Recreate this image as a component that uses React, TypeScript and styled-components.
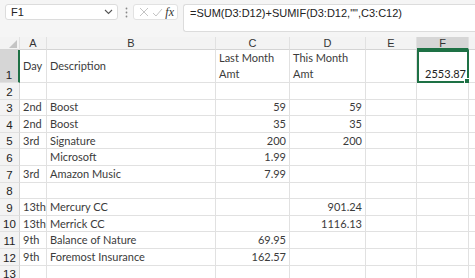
import React from 'react'
import styled,{createGlobalStyle,css} from 'styled-components'

const GRID_LINE='#e1e1e1'
const HEADER_BG='#f3f3f3'
const HEADER_ACTIVE_BG='#d6d6d6'
const SELECT_GREEN='#1e7145'
const CELL_TEXT='#3b3b3b'
const COLUMN_WIDTHS='20px 27px 169px 74px 76px 51px 52px 40px'
const COLUMNS=['A','B','C','D','E','F','G']
const ROW_HEIGHT=16.6

type CellValue=string|string[]

interface IRow{
    num:number;
    height:number;
    cells:CellValue[];
}

const ROWS:IRow[]=[
    {num:1,height:33,cells:['Day','Description',['Last Month','Amt'],['This Month','Amt'],'','2553.87','']},
    {num:2,height:ROW_HEIGHT,cells:['','','','','','','']},
    {num:3,height:ROW_HEIGHT,cells:['2nd','Boost','59','59','','','']},
    {num:4,height:ROW_HEIGHT,cells:['2nd','Boost','35','35','','','']},
    {num:5,height:ROW_HEIGHT,cells:['3rd','Signature','200','200','','','']},
    {num:6,height:ROW_HEIGHT,cells:['','Microsoft','1.99','','','','']},
    {num:7,height:ROW_HEIGHT,cells:['3rd','Amazon Music','7.99','','','','']},
    {num:8,height:ROW_HEIGHT,cells:['','','','','','','']},
    {num:9,height:ROW_HEIGHT,cells:['13th','Mercury CC','','901.24','','','']},
    {num:10,height:ROW_HEIGHT,cells:['13th','Merrick CC','','1116.13','','','']},
    {num:11,height:ROW_HEIGHT,cells:['9th','Balance of Nature','69.95','','','','']},
    {num:12,height:ROW_HEIGHT,cells:['9th','Foremost Insurance','162.57','','','','']},
    {num:13,height:ROW_HEIGHT,cells:['','','','','','','']},
]

const NUMERIC_COLUMNS=[2,3,5]

const GlobalStyle=createGlobalStyle`
html,body{
margin:0;
padding:0;
background:#ffffff;
overflow:hidden;
}
body{
font-family:"Liberation Sans",Arial,sans-serif;
}
`

/**
 * the name box, the small button group and the formula input above the grid
 */
const FormulaBar:React.FC=():React.ReactElement=>(
    <Toolbar>
        <NameBox>
            <span>F1</span>
            <svg width='9' height='6' viewBox='0 0 9 6'>
                <path d='M1 1 L4.5 4.5 L8 1' fill='none' stroke='#555' strokeWidth='1.1' />
            </svg>
        </NameBox>
        <Grip width='3' height='11' viewBox='0 0 3 11'>
            <circle cx='1.5' cy='1.5' r='0.9' fill='#888' />
            <circle cx='1.5' cy='5.5' r='0.9' fill='#888' />
            <circle cx='1.5' cy='9.5' r='0.9' fill='#888' />
        </Grip>
        <ActionBox>
            <svg width='10' height='10' viewBox='0 0 10 10'>
                <path d='M1 1 L9 9 M9 1 L1 9' stroke='#c4c4c4' strokeWidth='1' />
            </svg>
            <svg width='11' height='9' viewBox='0 0 11 9'>
                <path d='M1 5 L4 8 L10 1' fill='none' stroke='#c4c4c4' strokeWidth='1' />
            </svg>
            <Fx>fx</Fx>
        </ActionBox>
        <FormulaInput>=SUM(D3:D12)+SUMIF(D3:D12,"",C3:C12)</FormulaInput>
    </Toolbar>
)

const Toolbar=styled.div`
display:flex;
align-items:flex-start;
height:37px;
padding:4px 0 0 5px;
box-sizing:border-box;
background:#f5f5f5;
`

const NameBox=styled.div`
display:flex;
align-items:center;
justify-content:space-between;
width:113px;
height:16px;
padding:0 4px 0 5px;
box-sizing:border-box;
background:#ffffff;
border:1px solid #dcdcdc;
border-radius:3px;
font-size:11px;
color:#222;
`

const Grip=styled.svg`
margin:3px 5px 0 7px;
`

const ActionBox=styled.div`
display:flex;
align-items:center;
justify-content:space-between;
width:45px;
height:16px;
padding:0 3px 0 5px;
box-sizing:border-box;
background:#ffffff;
border:1px solid #e2e2e2;
border-radius:3px;
`

const Fx=styled.span`
font-family:"Liberation Serif","Times New Roman",serif;
font-style:italic;
font-size:12px;
color:#333;
`

const FormulaInput=styled.div`
flex:1;
height:28px;
margin-left:5px;
padding:2px 0 0 6px;
box-sizing:border-box;
background:#ffffff;
border:1px solid #dcdcdc;
border-right:none;
border-radius:3px 0 0 3px;
font-size:11px;
color:#222;
white-space:nowrap;
`

interface IHeaderCellProps{
    active?:boolean;
}

const HeaderCell=styled.div<IHeaderCellProps>`
display:flex;
align-items:center;
justify-content:center;
height:13px;
box-sizing:border-box;
background:${({active}):string=>active?HEADER_ACTIVE_BG:HEADER_BG};
border-right:1px solid ${GRID_LINE};
border-bottom:${({active}):string=>active?`2px solid ${SELECT_GREEN}`:`1px solid #d4d4d4`};
font-size:11px;
color:#333;
`

const Corner=styled(HeaderCell)`
justify-content:flex-end;
align-items:flex-end;
padding:0 2px 1px 0;
`

interface IRowHeadProps{
    active?:boolean;
    height:number;
}

const RowHead=styled.div<IRowHeadProps>`
display:flex;
align-items:flex-end;
justify-content:center;
height:${({height}):number=>height}px;
box-sizing:border-box;
background:${({active}):string=>active?HEADER_ACTIVE_BG:HEADER_BG};
border-bottom:1px solid ${GRID_LINE};
border-right:${({active}):string=>active?`2px solid ${SELECT_GREEN}`:`1px solid #d4d4d4`};
font-size:11.5px;
line-height:14px;
color:#222;
`

interface ICellProps{
    numeric?:boolean;
    height:number;
    selected?:boolean;
    wrap?:boolean;
}

const Cell=styled.div<ICellProps>`
position:relative;
display:flex;
flex-direction:column;
justify-content:center;
align-items:${({numeric}):string=>numeric?'flex-end':'flex-start'};
height:${({height}):number=>height}px;
padding:0 3px;
box-sizing:border-box;
border-right:1px solid ${GRID_LINE};
border-bottom:1px solid ${GRID_LINE};
font-family:Lato,"Open Sans",sans-serif;
font-size:11px;
line-height:16px;
color:${CELL_TEXT};
white-space:nowrap;
${({wrap}):ReturnType<typeof css>|string=>wrap?css`justify-content:space-between;`:''}
${({selected}):ReturnType<typeof css>|string=>selected?css`
justify-content:flex-end;
border:2px solid ${SELECT_GREEN};
line-height:14px;
padding:0 1px 0 3px;
color:#222;
`:''}
`

const FillHandle=styled.span`
position:absolute;
right:-3px;
bottom:-3px;
width:4px;
height:4px;
background:${SELECT_GREEN};
border:1px solid #ffffff;
`

const Sheet=styled.div`
display:grid;
grid-template-columns:${COLUMN_WIDTHS};
`

export default function App():React.ReactElement{
    return (
        <>
            <GlobalStyle />
            <FormulaBar />
            <Sheet>
                <Corner>
                    <svg width='8' height='8' viewBox='0 0 8 8'>
                        <path d='M8 0 L8 8 L0 8 Z' fill='#c4c4c4' />
                    </svg>
                </Corner>
                {COLUMNS.map(col=><HeaderCell key={col} active={col==='F'}>{col}</HeaderCell>)}
                {ROWS.map(row=>(
                    <React.Fragment key={row.num}>
                        <RowHead height={row.height} active={row.num===1}>{row.num}</RowHead>
                        {row.cells.map((value,index)=>{
                            const selected=row.num===1&&index===5
                            return (
                                <Cell key={index} height={row.height} numeric={NUMERIC_COLUMNS.includes(index)&&row.num>1||selected} wrap={Array.isArray(value)} selected={selected}>
                                    {Array.isArray(value)?value.map(line=><span key={line}>{line}</span>):value}
                                    {selected&&<FillHandle />}
                                </Cell>
                            )
                        })}
                    </React.Fragment>
                ))}
            </Sheet>
        </>
    )
}
